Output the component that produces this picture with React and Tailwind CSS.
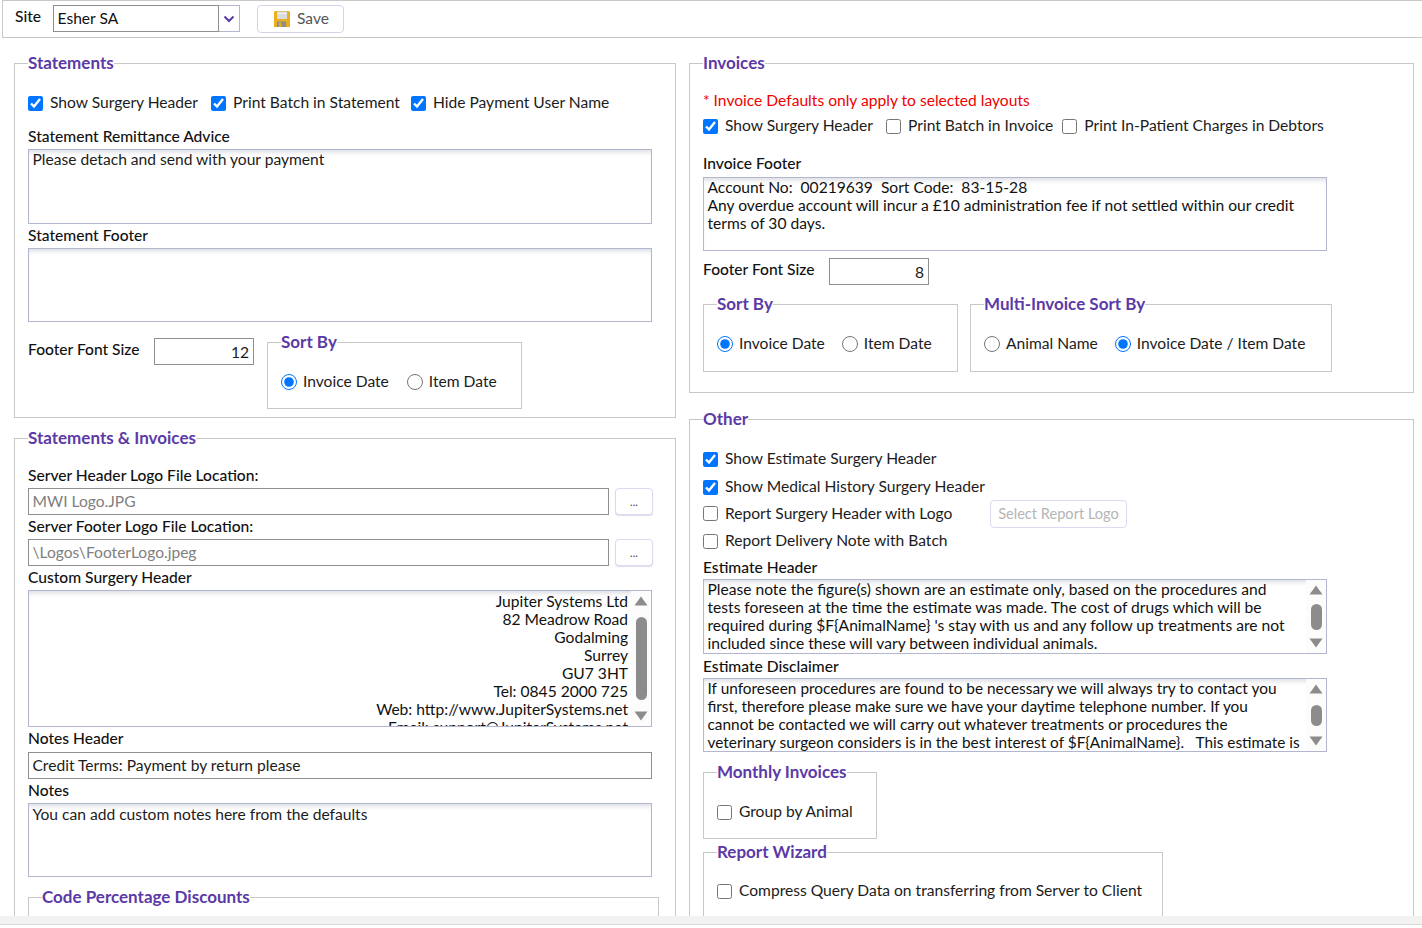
import React from 'react';

const boxBorder = 'border border-[#b3b6cf]';
const topShade = 'shadow-[inset_0_5px_5px_-3px_rgba(120,125,150,0.28)]';

function Legend({ children, className = '' }) {
  return <legend className={`text-[17px] leading-[20px] font-bold text-[#5b3aa6] ${className}`}>{children}</legend>;
}

function Group({ title, className = '', legendClass = 'ml-[13px]', children }) {
  return (
    <fieldset className={`border border-[#c8c8c8] min-w-0 ${className}`}>
      <Legend className={legendClass}>{title}</Legend>
      {children}
    </fieldset>
  );
}

function Check({ label, checked, className = '' }) {
  return (
    <label className={`flex items-center ${className}`}>
      <input type="checkbox" defaultChecked={checked} className="w-[15px] h-[15px] m-0 accent-[#0075ff] shrink-0" />
      <span className="ml-[7px] whitespace-nowrap">{label}</span>
    </label>
  );
}

function Radio({ label, checked, name, className = '' }) {
  return (
    <label className={`flex items-center ${className}`}>
      <input type="radio" name={name} defaultChecked={checked} className="w-[16px] h-[16px] m-0 accent-[#0075ff] shrink-0" />
      <span className="ml-[6px] whitespace-nowrap">{label}</span>
    </label>
  );
}

function Label({ children, className = '' }) {
  return <div className={`h-[18px] leading-[18px] text-[#111] font-medium ${className}`}>{children}</div>;
}

function TextBox({ children, className = '' }) {
  return <div className={`${boxBorder} ${topShade} bg-white h-[74px] px-[3.5px] leading-[18px] overflow-hidden ${className}`}>{children}</div>;
}

function Scrollbar({ thumbClass }) {
  return (
    <div className="w-[20px] shrink-0 bg-[#fcfcfc] flex flex-col items-center justify-between py-[5px]">
      <svg width="14" height="10" viewBox="0 0 14 10"><path d="M7 0.5 13.5 9.5H0.5Z" fill="#8c8c8c" /></svg>
      <div className={`w-[11px] rounded-full bg-[#8c8c8c] ${thumbClass}`} />
      <svg width="14" height="10" viewBox="0 0 14 10"><path d="M0.5 0.5H13.5L7 9.5Z" fill="#8c8c8c" /></svg>
    </div>
  );
}

function NumberBox({ value }) {
  return <div className="w-[100px] h-[27px] border border-[#8f8f8f] bg-white text-right pr-1 leading-[26px]">{value}</div>;
}

function PathRow({ value }) {
  return (
    <div className="flex h-[27px] gap-[6px]">
      <div className="w-[581px] border border-[#8f8f8f] px-[3.5px] leading-[25px] text-[#808080]">{value}</div>
      <button className="w-[38px] border border-[#dcdaf0] rounded-[4px] bg-white text-[11px] leading-[25px] text-[#444] shadow-[0_1px_1px_rgba(120,120,170,0.25)]">...</button>
    </div>
  );
}

function SaveIcon() {
  return (
    <svg width="18" height="18" viewBox="0 0 18 18">
      <path d="M1 2.5A1.5 1.5 0 0 1 2.5 1H15.5A1.5 1.5 0 0 1 17 2.5V17H1Z" fill="#e8b020" />
      <rect x="4" y="1.5" width="10" height="7.5" fill="#dcdcdc" />
      <rect x="4" y="3" width="10" height="1" fill="#f2f2f2" />
      <rect x="4" y="11.5" width="9" height="5.5" fill="#8d8d8d" />
      <rect x="6" y="12.5" width="2.5" height="4.5" fill="#e8b020" />
    </svg>
  );
}

export default function App() {
  return (
    <div className="h-[928px] w-[1422px] overflow-hidden bg-white text-[15.6px] text-[#1c1c1c] flex flex-col font-['Lato','Inter',sans-serif]">
      {/* Barra superior */}
      <div className="h-[38px] shrink-0 ml-[2px] border border-[#c8c8c8] border-r-0 flex items-center">
        <span className="ml-[12px] w-[38px] -mt-[5px] font-medium text-[#111]">Site</span>
        <div className="flex h-[27px] -mt-[1px]">
          <div className="w-[166px] border border-[#8f8f8f] px-[3.5px] leading-[25px] text-[#111]">Esher SA</div>
          <div className="w-[21px] border border-[#b3b6cf] border-l-0 flex items-center justify-center">
            <svg width="12" height="8" viewBox="0 0 12 8" fill="none"><path d="M1.5 1.5 6 6l4.5-4.5" stroke="#5b3aa6" strokeWidth="2" /></svg>
          </div>
        </div>
        <button className="ml-[17px] -mt-[1px] w-[87px] h-[28px] border border-[#d5d3ea] rounded-[4px] bg-white flex items-center pl-[15px] gap-[6px] text-[#555]">
          <SaveIcon />
          <span>Save</span>
        </button>
      </div>

      {/* Contenido */}
      <div className="h-[878px] shrink-0 flex overflow-hidden">
        {/* Columna izquierda */}
        <div className="w-[689px] shrink-0 pl-[14px] pr-[13px] pt-[15px]">
          <Group title="Statements" className="h-[365px] px-[13px]" legendClass="ml-0">
            <div className="flex items-center h-[18px] mt-[21px]">
              <Check checked label="Show Surgery Header" />
              <Check checked label="Print Batch in Statement" className="ml-[13px]" />
              <Check checked label="Hide Payment User Name" className="ml-[11px]" />
            </div>
            <Label className="mt-[15px]">Statement Remittance Advice</Label>
            <TextBox className="w-[624px] h-[75px] mt-[4px]">Please detach and send with your payment</TextBox>
            <Label className="mt-[2px]">Statement Footer</Label>
            <TextBox className="w-[624px] mt-[4px]" />
            <div className="flex mt-[16px]">
              <Label className="w-[126px] mt-[2px]">Footer Font Size</Label>
              <div><NumberBox value="12" /></div>
              <Group title="Sort By" className="ml-[13px] w-[255px] h-[77px] -mt-[6px]">
                <div className="flex items-center h-[18px] mt-[21px] ml-[13px]">
                  <Radio checked name="s1" label="Invoice Date" />
                  <Radio name="s1" label="Item Date" className="ml-[18px]" />
                </div>
              </Group>
            </div>
          </Group>

          <Group title="Statements &amp; Invoices" className="mt-[10px] h-[600px] px-[13px]" legendClass="ml-0">
            <Label className="mt-[18px]">Server Header Logo File Location:</Label>
            <div className="mt-[4px]"><PathRow value="MWI Logo.JPG" /></div>
            <Label className="mt-[2px]">Server Footer Logo File Location:</Label>
            <div className="mt-[4px]"><PathRow value="\Logos\FooterLogo.jpeg" /></div>
            <Label className="mt-[2px]">Custom Surgery Header</Label>
            <div className={`flex w-[624px] h-[137px] mt-[4px] overflow-hidden ${boxBorder} ${topShade}`}>
              <div className="flex-1 text-right pr-[3px] pt-px leading-[18px] text-[#111]">
                <div>Jupiter Systems Ltd</div>
                <div>82 Meadrow Road</div>
                <div>Godalming</div>
                <div>Surrey</div>
                <div>GU7 3HT</div>
                <div>Tel: 0845 2000 725</div>
                <div>Web: http://www.JupiterSystems.net</div>
                <div>Email: support@JupiterSystems.net</div>
              </div>
              <Scrollbar thumbClass="h-[83px]" />
            </div>
            <Label className="mt-[2px]">Notes Header</Label>
            <div className="w-[624px] h-[27px] mt-[5px] border border-[#8f8f8f] px-[3.5px] leading-[25px]">Credit Terms: Payment by return please</div>
            <Label className="mt-[2px]">Notes</Label>
            <TextBox className="w-[624px] mt-[4px] pt-px">You can add custom notes here from the defaults</TextBox>
            <Group title="Code Percentage Discounts" className="w-[631px] h-[80px] mt-[10px]" />
          </Group>
        </div>

        {/* Columna derecha */}
        <div className="w-[725px] shrink-0 pt-[15px]">
          <Group title="Invoices" className="h-[340px] px-[13px]" legendClass="ml-0">
            <div className="h-[18px] leading-[18px] mt-[18px] text-[#f00000]">* Invoice Defaults only apply to selected layouts</div>
            <div className="flex items-center h-[18px] mt-[8px]">
              <Check checked label="Show Surgery Header" />
              <Check label="Print Batch in Invoice" className="ml-[13px]" />
              <Check label="Print In-Patient Charges in Debtors" className="ml-[9px]" />
            </div>
            <Label className="mt-[19px]">Invoice Footer</Label>
            <TextBox className="w-[624px] mt-[5px] text-[#111]">
              Account No:&nbsp; 00219639&nbsp; Sort Code:&nbsp; 83-15-28<br />
              Any overdue account will incur a £10 administration fee if not settled within our credit terms of 30 days.
            </TextBox>
            <div className="flex items-center mt-[7px]">
              <Label className="w-[126px] -mt-[5px]">Footer Font Size</Label>
              <NumberBox value="8" />
            </div>
            <div className="flex gap-[12px] mt-[9px]">
              <Group title="Sort By" className="w-[255px] h-[78px]">
                <div className="flex items-center h-[18px] mt-[21px] ml-[13px]">
                  <Radio checked name="s2" label="Invoice Date" />
                  <Radio name="s2" label="Item Date" className="ml-[17px]" />
                </div>
              </Group>
              <Group title="Multi-Invoice Sort By" className="w-[362px] h-[78px]">
                <div className="flex items-center h-[18px] mt-[21px] ml-[13px]">
                  <Radio name="s3" label="Animal Name" />
                  <Radio checked name="s3" label="Invoice Date / Item Date" className="ml-[17px]" />
                </div>
              </Group>
            </div>
          </Group>

          <Group title="Other" className="mt-[16px] h-[600px] px-[13px]" legendClass="ml-0">
            <Check checked label="Show Estimate Surgery Header" className="h-[18px] mt-[21px]" />
            <Check checked label="Show Medical History Surgery Header" className="h-[18px] mt-[10px]" />
            <div className="flex items-center h-[28px] mt-[4px]">
              <Check label="Report Surgery Header with Logo" className="w-[287px]" />
              <button className="w-[137px] h-[28px] border border-[#dcdaf0] rounded-[4px] text-[14.6px] text-[#b5b5b5] bg-white">Select Report Logo</button>
            </div>
            <Check label="Report Delivery Note with Batch" className="h-[18px] mt-[4px]" />
            <Label className="mt-[8px]">Estimate Header</Label>
            <div className={`flex w-[624px] h-[75px] mt-[3px] overflow-hidden ${boxBorder} ${topShade}`}>
              <div className="flex-1 px-[3.5px] leading-[18px] text-[#111]">
                Please note the figure(s) shown are an estimate only, based on the procedures and tests foreseen at the time the estimate was made. The cost of drugs which will be required during $F&#123;AnimalName&#125; 's stay with us and any follow up treatments are not included since these will vary between individual animals.
              </div>
              <Scrollbar thumbClass="h-[26px]" />
            </div>
            <Label className="mt-[3px]">Estimate Disclaimer</Label>
            <div className={`flex w-[624px] h-[74px] mt-[3px] overflow-hidden ${boxBorder} ${topShade}`}>
              <div className="flex-1 px-[3.5px] text-[15.4px] leading-[18px] text-[#111] whitespace-nowrap">
                If unforeseen procedures are found to be necessary we will always try to contact you<br />
                first, therefore please make sure we have your daytime telephone number. If you<br />
                cannot be contacted we will carry out whatever treatments or procedures the<br />
                veterinary surgeon considers is in the best interest of $F&#123;AnimalName&#125;. &nbsp; This estimate is
              </div>
              <Scrollbar thumbClass="h-[21px]" />
            </div>
            <Group title="Monthly Invoices" className="w-[174px] h-[77px] mt-[10px]">
              <Check label="Group by Animal" className="h-[18px] mt-[21px] ml-[13px]" />
            </Group>
            <Group title="Report Wizard" className="w-[460px] h-[80px] mt-[3px]">
              <Check label="Compress Query Data on transferring from Server to Client" className="h-[18px] mt-[20px] ml-[13px]" />
            </Group>
          </Group>
        </div>
      </div>

      {/* Pie gris */}
      <div className="h-[9px] shrink-0 bg-[#f2f2f2] border-b border-[#d8d8d8]" />
    </div>
  );
}
